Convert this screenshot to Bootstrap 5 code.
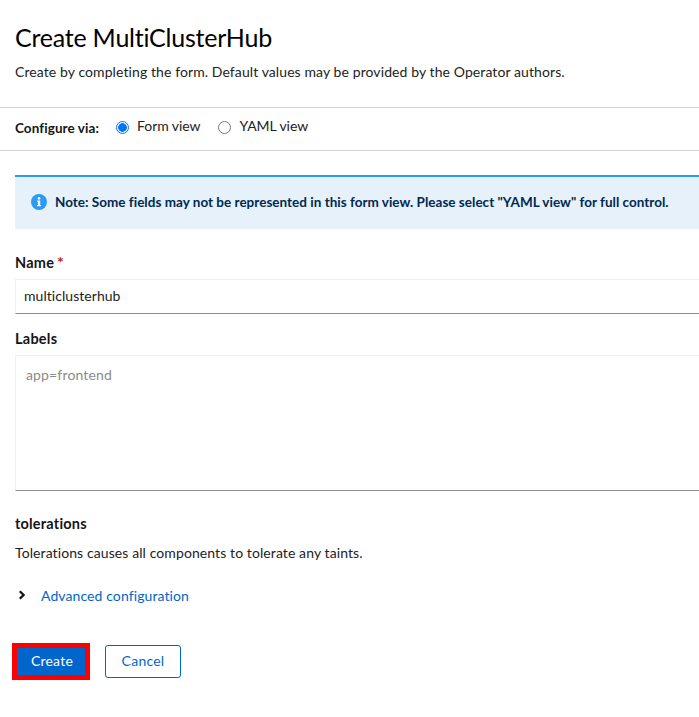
<!DOCTYPE html>
<html lang="en">
<head>
<meta charset="utf-8">
<title>Create MultiClusterHub</title>
<link href="https://cdn.jsdelivr.net/npm/bootstrap@5.3.0/dist/css/bootstrap.min.css" rel="stylesheet">
<style>
body{font-family:Lato,"Noto Sans",sans-serif;font-size:14px;line-height:21px;letter-spacing:.093px;color:#222;background:#fff;overflow:hidden}
.page{width:720px;height:717px}
.page-head{height:108px;padding:21px 15px 0;border-bottom:1px solid #d2d2d2}
.page-title{font-size:25px;line-height:32px;letter-spacing:-.222px;margin:0 0 8px;color:#000;font-weight:400}
.page-desc{margin:0}
.view-bar{height:43px;padding:0 15px 1px;border-bottom:1px solid #d2d2d2}
.view-title{font-size:13.5px;font-weight:700;letter-spacing:.08px;width:101px;color:#151515}
.view-option{letter-spacing:-.06px;padding-bottom:7px}
.view-option + .view-option{margin-left:18px}
.view-bar .form-check-input{width:13px;height:13px;margin:5px 8px 0 0;border:1px solid #767676}
.view-bar .form-check-input:checked{background:radial-gradient(circle,#0075ff 0 4px,#fff 4.6px);border:1.5px solid #0075ff}
.form-area{padding:24px 0 0 15px}
.note{height:54px;border:0;border-top:2px solid #2b9af3;border-radius:0;background:#e7f1fa;color:#002952;padding:0 16px 1px;margin:0 0 23px}
.note .info-icon{margin-top:-1px}
.note-text{font-size:13.5px;font-weight:700;letter-spacing:.015px}
.field-label{display:block;margin:0 0 6px;font-weight:700;font-size:14.5px;letter-spacing:.25px;height:21px;color:#151515}
.required{color:#c9190b;margin-left:-1px;font-size:16px;line-height:16px}
.field{border:1px solid #f0f0f0;border-bottom-color:#8a8d90;border-radius:0;font-size:14px;line-height:21px;letter-spacing:.046px;color:#222;padding:5px 8px 7px}
input.field{height:35px;margin-bottom:14px}
textarea.field{height:136px;resize:none;padding:8px 10px;margin-bottom:22px;letter-spacing:.15px}
.field::placeholder{color:#8a8a8a;opacity:1}
.section-title{font-size:14.5px;line-height:21px;letter-spacing:.2px;margin:0 0 8px;font-weight:700;color:#151515}
.section-desc{margin:0 0 22px}
.chevron{margin:0 15px 1px 3px}
.advanced{color:#06c;text-decoration:none}
.actions{margin:37px 0 0 -3px;gap:15px}
.actions .btn{font-size:14px;line-height:21px;letter-spacing:.23px;padding:0 0 2px}
.actions .create{width:78px;height:37px;border:5px solid #f00;border-radius:0;background:#06c;color:#fff;padding-left:2px}
.actions .cancel{width:76px;height:33px;border:1px solid #06c;border-radius:3px;color:#06c}
</style>
</head>
<body>
<main class="page">
  <header class="page-head">
    <h1 class="page-title">Create MultiClusterHub</h1>
    <p class="page-desc">Create by completing the form. Default values may be provided by the Operator authors.</p>
  </header>
  <div class="view-bar d-flex align-items-center">
    <span class="view-title">Configure via:</span>
    <label class="view-option d-flex align-items-center"><input class="form-check-input flex-shrink-0" type="radio" name="view" checked>Form view</label>
    <label class="view-option d-flex align-items-center"><input class="form-check-input flex-shrink-0" type="radio" name="view">YAML view</label>
  </div>
  <form class="form-area">
    <div class="note alert d-flex align-items-center">
      <svg class="info-icon me-2 flex-shrink-0" width="16" height="16" viewBox="0 0 16 16"><circle cx="8" cy="8" r="8" fill="#2b9af3"/><circle cx="8" cy="4.3" r="1.35" fill="#fff"/><path d="M6.1 6.5h3.1v4.4h.8v1.3H6.1v-1.3h.8V7.8h-.8z" fill="#fff"/></svg>
      <span class="note-text text-nowrap">Note: Some fields may not be represented in this form view. Please select "YAML view" for full control.</span>
    </div>
    <label class="field-label" for="hub-name">Name <span class="required">*</span></label>
    <input class="form-control field" id="hub-name" value="multiclusterhub">
    <label class="field-label" for="hub-labels">Labels</label>
    <textarea class="form-control field" id="hub-labels" placeholder="app=frontend"></textarea>
    <h2 class="section-title">tolerations</h2>
    <p class="section-desc">Tolerations causes all components to tolerate any taints.</p>
    <div class="d-flex align-items-center">
      <svg class="chevron" width="8" height="10" viewBox="0 0 8 10"><path d="M1.8 1.2 5.6 5 1.8 8.8" fill="none" stroke="#151515" stroke-width="2.3"/></svg>
      <a class="advanced" href="#">Advanced configuration</a>
    </div>
    <div class="actions d-flex align-items-center">
      <button type="button" class="btn create">Create</button>
      <button type="button" class="btn cancel">Cancel</button>
    </div>
  </form>
</main>
<script src="https://cdn.jsdelivr.net/npm/bootstrap@5.3.0/dist/js/bootstrap.bundle.min.js"></script>
</body>
</html>
